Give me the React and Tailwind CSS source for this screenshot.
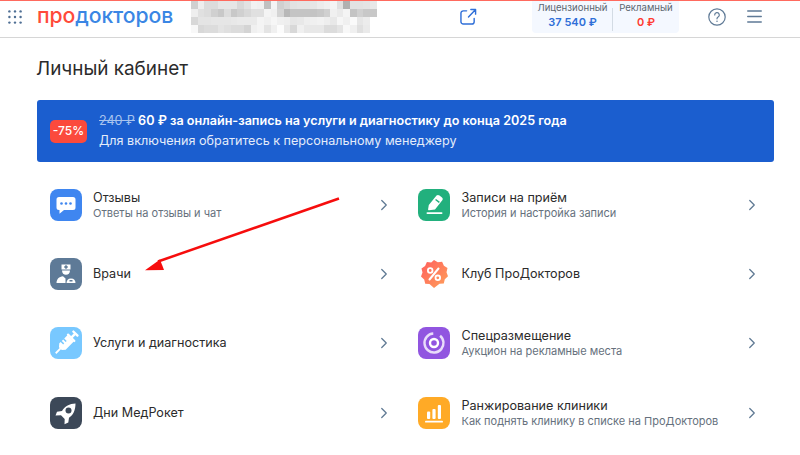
import React from "react";
import { ChevronRight } from "lucide-react";

const font = "font-['Inter','Liberation_Sans',sans-serif]";

const blur = [
  "d0 ee dc dc e6 e6 e6 d8 e2 f2 f0 c0 f4 d0 d8 e2 e4 e4 e6 ec f0 f4 e0 b0 e2 e2 e4 e8",
  "ee e0 dc d0 c8 dc c8 d0 d8 e0 e0 f4 f0 d4 b8 c4 c4 c4 c4 c8 d0 f0 ea f4 c4 d0 c8 c8",
  "d8 e4 e4 e6 e6 e6 e8 ea ea ea f4 f0 f6 f0 ee e6 e8 ee f0 f2 ee e8 f6 f0 fa e6 ec ff",
  "f8 d8 dc dc e4 e0 dc dc d4 f0 f4 e4 f0 fc e8 d8 f0 e8 e8 e8 dc dc e4 f8 f0 e0 ea ff",
].map((r) => r.split(" "));

function Blur() {
  return (
    <div className="flex flex-col w-[186px] ml-[19px] shrink-0 self-start">
      {blur.map((row, i) => (
        <div key={i} className="flex h-[8px]">
          {row.map((c, j) => (
            <div key={j} className="w-[6.64px] h-full" style={{ background: `#${c}${c}${c}` }} />
          ))}
        </div>
      ))}
    </div>
  );
}

function Tile({ bg, children }) {
  return (
    <div className={`w-8 h-8 rounded-[8px] ${bg} flex items-center justify-center shrink-0`}>
      <svg viewBox="0 0 32 32" className="w-8 h-8">{children}</svg>
    </div>
  );
}

const icons = {
  chat: (
    <Tile bg="bg-[#3f86f0]">
      <path d="M9 8h14a2.500 2.500 0 0 1 2.500 2.500v8a2.500 2.500 0 0 1-2.500 2.500h-9l-4.500 3.800V21H9a2.500 2.500 0 0 1-2.500-2.500v-8A2.500 2.500 0 0 1 9 8z" fill="#fff" />
      <circle cx="11.500" cy="14.500" r="1.300" fill="#3f86f0" />
      <circle cx="16" cy="14.500" r="1.300" fill="#3f86f0" />
      <circle cx="20.500" cy="14.500" r="1.300" fill="#3f86f0" />
    </Tile>
  ),
  doctor: (
    <Tile bg="bg-[#5e7a97]">
      <path d="M11.500 6.500h9v5h-9z" fill="#fff" />
      <path d="M15.200 7.300h1.600v1h1v1.500h-1v1h-1.600v-1h-1V8.300h1z" fill="#5e7a97" />
      <path d="M12 12.500h8c0 2.700-1.700 4.300-4 4.300s-4-1.600-4-4.300z" fill="#fff" />
      <path d="M6.500 25c0-3.700 2.500-6.400 6.500-6.700l2.500 2.200V25z" fill="#fff" />
      <path d="M16.500 25c0-2.500 1.500-4.500 4.500-4.500s4.500 2 4.500 4.500z" fill="#fff" />
      <rect x="19.500" y="22" width="3" height="1.500" fill="#5e7a97" />
    </Tile>
  ),
  syringe: (
    <Tile bg="bg-[#78c8ff]">
      <g transform="rotate(45 16 16)" fill="#fff">
        <rect x="12" y="1.500" width="8" height="2.400" rx="1" />
        <rect x="14.800" y="3.500" width="2.400" height="5" />
        <rect x="10.500" y="7.500" width="11" height="2.400" rx="1" />
        <path d="M11.500 9.500h9v11.500l-2.500 3h-4l-2.500-3v-2h3.500v-1.500h-3.500v-2h3.500v-1.500h-3.500z" />
        <rect x="15.100" y="23" width="1.800" height="7.500" />
      </g>
    </Tile>
  ),
  rocket: (
    <Tile bg="bg-[#3c4858]">
      <path d="M25.500 6.500c-6 .3-10.500 2.500-13.500 7.500l-5 .8L5.500 18.500l5.500-.2 3.700 3.700-.2 5.300 3.800-1.700.7-4.800c4.500-3 6.500-7.800 6.500-14.300z" fill="#fff" />
      <circle cx="18.500" cy="13.500" r="3" fill="#3c4858" />
    </Tile>
  ),
  pen: (
    <Tile bg="bg-[#22b07d]">
      <path d="M18.500 6.500c1-.8 2-.7 3 0l2.500 2c.9.800 1 1.800.3 2.800L17 20.500l-6 .8c-.6 0-1-.4-.9-1l.7-4.300z" fill="#fff" />
      <path d="M18 10l3.800 2.800-.9 1.100-3.800-2.800z" fill="#22b07d" />
      <rect x="8.500" y="23.200" width="16" height="1.800" rx="0.900" fill="#fff" />
    </Tile>
  ),
  percent: (
    <svg viewBox="0 0 32 32" className="w-8 h-8 shrink-0">
      <defs>
        <linearGradient id="pg" x1="0" y1="0" x2="1" y2="1">
          <stop offset="0" stopColor="#ff5d5d" />
          <stop offset="1" stopColor="#ffa15a" />
        </linearGradient>
      </defs>
      <path d="M16 2l3.800 2.200 4.300-.4 1.800 3.900 3.600 2.400-1 4.200 1.500 4-3.200 2.900-1 4.300-4.300.3L16 30l-4.500-3.900-4.300-.3-1-4.300L3 18.600l1.500-4-1-4.200 3.600-2.400 1.800-3.900 4.300.4z" fill="url(#pg)" />
      <circle cx="12.200" cy="12.500" r="2.300" fill="none" stroke="#fff" strokeWidth="1.800" />
      <circle cx="19.800" cy="19.800" r="2.300" fill="none" stroke="#fff" strokeWidth="1.800" />
      <path d="M20.500 10.500L11.500 21.500" stroke="#fff" strokeWidth="2" strokeLinecap="round" />
    </svg>
  ),
  target: (
    <Tile bg="bg-[#9155e0]">
      <circle cx="16" cy="16" r="9.500" fill="none" stroke="#e9dcfa" strokeWidth="2.400" strokeDasharray="52 8" transform="rotate(-50 16 16)" />
      <circle cx="16" cy="16" r="4" fill="none" stroke="#fff" strokeWidth="2.400" />
    </Tile>
  ),
  chart: (
    <Tile bg="bg-[#ffaa26]">
      <rect x="9" y="14.500" width="3.200" height="7.500" rx="1" fill="#fff" />
      <rect x="14.400" y="12" width="3.200" height="10" rx="1" fill="#fff" />
      <rect x="19.800" y="8" width="3.200" height="14" rx="1" fill="#fff" />
      <rect x="7" y="23.800" width="18" height="1.800" rx="0.900" fill="#fff" />
    </Tile>
  ),
};

function Row({ icon, title, sub }) {
  return (
    <div className="h-[69.300px] flex items-center pl-[12.500px] pr-[13px]">
      {icons[icon]}
      <div className="ml-[11.500px] flex-1 min-w-0">
        <div className="text-[12.600px] leading-[16px] text-[#2b2b2b]">{title}</div>
        {sub && <div className="text-[11px] leading-[14px] text-[#66717d] whitespace-nowrap">{sub}</div>}
      </div>
      <ChevronRight className="w-[18px] h-[18px] text-[#607a94] shrink-0" strokeWidth={1.700} />
    </div>
  );
}

export default function App() {
  return (
    <div className={`${font} relative w-[800px] h-[455px] bg-white overflow-hidden`}>
      <div className="h-[38px] border-t border-t-[#ff6a5e] border-b border-b-[#d6d6d6] flex items-center pb-[5px]">
        <svg viewBox="0 0 15 15" className="w-[14px] h-[14px] ml-[8px] shrink-0" fill="#4f6f94">
          {[1.500, 7.500, 13.500].flatMap((y) =>
            [1.500, 7.500, 13.500].map((x) => <circle key={`${x}-${y}`} cx={x} cy={y} r="1.300" />)
          )}
        </svg>
        <div className="ml-[15px] w-[135px] text-[21.200px] leading-[26px] font-medium tracking-[-0.1px] whitespace-nowrap -mt-[3px]">
          <span className="text-[#ff4a3a]">про</span>
          <span className="text-[#3a86e4]">докторов</span>
        </div>
        <Blur />
        <svg viewBox="0 0 18 18" className="w-[17px] h-[17px] ml-[83px] shrink-0" fill="none" stroke="#2f6fd8" strokeWidth="1.500" strokeLinecap="round" strokeLinejoin="round">
          <path d="M7 3H3.500A2.500 2.500 0 0 0 1 5.500v9A2.500 2.500 0 0 0 3.500 17h9a2.500 2.500 0 0 0 2.500-2.500V11" />
          <path d="M9 9.500L16.500 1.500M11.500 1.500h5v5" />
        </svg>
        <div className="ml-[55px] w-[147px] h-[32px] self-start bg-[#f4f8ff] rounded-b-[4px] flex text-center shrink-0">
          <div className="w-[81px] relative flex flex-col">
            <div className="text-[9.600px] leading-[13px] text-[#5c6670]">Лицензионный</div>
            <div className="text-[11px] leading-[15px] font-semibold text-[#2f6fd8] mt-[1px]">37 540 ₽</div>
            <div className="absolute right-0 top-[7px] bottom-[2px] w-px bg-[#d3dbe4]" />
          </div>
          <div className="flex-1 flex flex-col">
            <div className="text-[9.600px] leading-[13px] text-[#5c6670]">Рекламный</div>
            <div className="text-[11px] leading-[15px] font-semibold text-[#ff3b30] mt-[1px]">0 ₽</div>
          </div>
        </div>
        <svg viewBox="0 0 18 18" className="w-[18px] h-[18px] ml-[29px] shrink-0" fill="none" stroke="#5f7a96" strokeWidth="1.200" strokeLinecap="round">
          <circle cx="9" cy="9" r="8.200" />
          <path d="M6.700 7a2.300 2.300 0 1 1 3.400 2c-.8.500-1.100 1-1.100 1.800" />
          <path d="M9 13.200v.1" strokeWidth="1.500" />
        </svg>
        <svg viewBox="0 0 15 13" className="w-[15px] h-[13px] ml-[21px] shrink-0" stroke="#5f7a96" strokeWidth="1.300" strokeLinecap="round">
          <path d="M.7 1h13.600M.7 6.500h13.600M.7 12h13.600" />
        </svg>
      </div>

      <main className="pl-[37px] pr-[26px]">
        <h1 className="pt-[19px] pb-[19px] text-[18.900px] leading-[24px] text-[#2b2b2b] -ml-[1px]">Личный кабинет</h1>
        <div className="h-[62px] rounded-[3px] bg-[#1b5ecf] flex items-center pl-[13px] text-white">
          <div className="w-[37px] h-[23px] rounded-[5px] bg-[#fb4a3c] text-[12px] font-medium flex items-center justify-center">-75%</div>
          <div className="ml-[12px]">
            <div className="text-[12.600px] leading-[20px] font-semibold">
              <span className="line-through font-normal text-[#a8c3ee]">240 ₽</span> 60 ₽ за онлайн-запись на услуги и диагностику до конца 2025 года
            </div>
            <div className="text-[12.600px] leading-[20px] text-[#e4ecfa]">Для включения обратитесь к персональному менеджеру</div>
          </div>
        </div>
        <div className="mt-[8px] grid grid-cols-2">
          <Row icon="chat" title="Отзывы" sub="Ответы на отзывы и чат" />
          <Row icon="pen" title="Записи на приём" sub="История и настройка записи" />
          <Row icon="doctor" title="Врачи" />
          <Row icon="percent" title="Клуб ПроДокторов" />
          <Row icon="syringe" title="Услуги и диагностика" />
          <Row icon="target" title="Спецразмещение" sub="Аукцион на рекламные места" />
          <Row icon="rocket" title="Дни МедРокет" />
          <Row icon="chart" title="Ранжирование клиники" sub="Как поднять клинику в списке на ПроДокторов" />
        </div>
      </main>

      <svg viewBox="0 0 800 455" className="absolute inset-0 w-[800px] h-[455px] pointer-events-none">
        <path d="M339 198.500L158 261.500" stroke="#f60d0d" strokeWidth="2.500" fill="none" />
        <path d="M145 270.200L160 259.500L164 270z" fill="#f60d0d" />
      </svg>
    </div>
  );
}
